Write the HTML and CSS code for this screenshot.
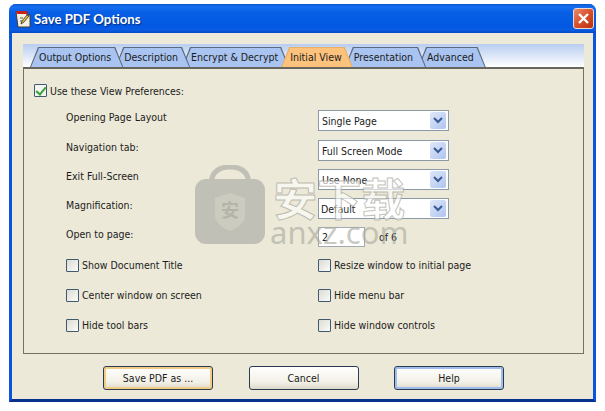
FILE: index.html
```html
<!DOCTYPE html>
<html>
  <head>
    <title>Save PDF Options</title>
    <link rel="stylesheet" href="styles.css">
  </head>
  <body class="body">
    <div class="window">
      <div class="titlebar">
        <svg class="app-icon" width="17" height="18" viewBox="0 0 17 18">
          <path d="M1 2h11v3h3v12H3z" fill="#f4f1e4" stroke="#4a3a30"/>
          <path d="M1 1h11l1 3H2z" fill="#c8201c"/>
          <path d="M6 14l1-3 5-6 2 1-5 6z" fill="#e8c040" stroke="#3a2a20" stroke-width=".8"/>
          <path d="M5 8h3M5 11h2" stroke="#555"/>
        </svg>
        <span class="title">Save PDF Options</span>
        <div class="close">
          <svg width="13" height="13" viewBox="0 0 13 13"><path d="M2 2l9 9M11 2l-9 9" stroke="#fff" stroke-width="2.4"/></svg>
        </div>
      </div>
      <div class="content">
        <div class="tabstrip">
          <div class="tab t1"><span>Output Options</span></div>
          <div class="tab t2"><span>Description</span></div>
          <div class="tab t3"><span>Encrypt &amp; Decrypt</span></div>
          <div class="tab active"><span>Initial View</span></div>
          <div class="tab t5"><span>Presentation</span></div>
          <div class="tab t6"><span>Advanced</span></div>
        </div>
        <div class="panel">
          <label class="check top-check"><input type="checkbox" checked><span>Use these View Preferences:</span></label>
          <div class="prefs">
            <div class="label">Opening Page Layout</div>
            <div class="combo"><span>Single Page</span><i class="arrow"><svg width="10" height="7" viewBox="0 0 10 7"><path d="M1 1l4 4 4-4" fill="none" stroke="#3a5a96" stroke-width="2"/></svg></i></div>
            <div class="label">Navigation tab:</div>
            <div class="combo"><span>Full Screen Mode</span><i class="arrow"><svg width="10" height="7" viewBox="0 0 10 7"><path d="M1 1l4 4 4-4" fill="none" stroke="#3a5a96" stroke-width="2"/></svg></i></div>
            <div class="label">Exit Full-Screen</div>
            <div class="combo"><span>Use None</span><i class="arrow"><svg width="10" height="7" viewBox="0 0 10 7"><path d="M1 1l4 4 4-4" fill="none" stroke="#3a5a96" stroke-width="2"/></svg></i></div>
            <div class="label">Magnification:</div>
            <div class="combo tight"><span>Default</span><i class="arrow"><svg width="10" height="7" viewBox="0 0 10 7"><path d="M1 1l4 4 4-4" fill="none" stroke="#3a5a96" stroke-width="2"/></svg></i></div>
            <div class="label">Open to page:</div>
            <div class="page-row"><div class="page-input">2</div><span>of 6</span></div>
          </div>
          <div class="checks">
            <label class="check"><input type="checkbox"><span>Show Document Title</span></label>
            <label class="check"><input type="checkbox"><span>Resize window to initial page</span></label>
            <label class="check"><input type="checkbox"><span>Center window on screen</span></label>
            <label class="check"><input type="checkbox"><span>Hide menu bar</span></label>
            <label class="check"><input type="checkbox"><span>Hide tool bars</span></label>
            <label class="check"><input type="checkbox"><span>Hide window controls</span></label>
          </div>
        </div>
        <div class="buttons">
          <div class="button default">Save PDF as ...</div>
          <div class="button">Cancel</div>
          <div class="button focus">Help</div>
        </div>
      </div>
      <!-- watermark sits on top of the dialog -->
      <div class="watermark">
        <svg width="72" height="80" viewBox="0 0 72 80">
          <path d="M17 18C18 6 26 2 36 2s18 4 19 16" fill="none" stroke="#bdbcb3" stroke-width="5"/>
          <rect x="1" y="14" width="70" height="65" rx="11" fill="#bdbcb3"/>
          <path d="M21 33l15-5 15 5v18c0 7-8 12-15 15-7-3-15-8-15-15z" fill="#c9c8be"/>
          <text x="36" y="52" text-anchor="middle" class="wm-glyph">安</text>
        </svg>
        <div class="wm-text">
          <div class="wm-cn">安下载</div>
          <div class="wm-en">anxz.com</div>
        </div>
      </div>
    </div>
  </body>
</html>
```

FILE: styles.css
```css
* {
  box-sizing: border-box;
}
.body {
  margin: 0;
  padding: 4px 0 0 9px;
  background: #fff;
  font-family: "DejaVu Sans Condensed", "DejaVu Sans", sans-serif;
  font-stretch: condensed;
  font-size: 10.5px;
  color: #1c1c1c;
  overflow: hidden;
}
.window {
  position: relative;
  width: 587px;
  height: 398px;
  display: flex;
  flex-direction: column;
  border-radius: 7px 7px 0 0;
  background: #0a55dc;
  border: 3px solid #0a55dc;
  border-top: 0;
  border-bottom-color: #06328c;
}
.titlebar {
  height: 29px;
  margin: 0 -3px;
  padding: 0 2px 0 6px;
  display: flex;
  align-items: center;
  flex-shrink: 0;
  border-radius: 7px 7px 0 0;
  background: linear-gradient(#0a58d4 0, #1670f0 3px, #0860e6 8px, #0258e2 22px, #0a5ce4 26px, #0648c4 29px);
}
.app-icon {
  margin-right: 2px;
}
.title {
  flex: 1;
  color: #fff;
  font-family: Lato, sans-serif;
  font-stretch: normal;
  font-size: 13.2px;
  font-weight: 700;
  text-shadow: 1px 1px 1px #0a2f80;
}
.close {
  width: 21px;
  height: 21px;
  display: flex;
  align-items: center;
  justify-content: center;
  border: 1px solid #f0d8d0;
  border-radius: 3px;
  background: linear-gradient(135deg, #e88c70, #d8502c 50%, #b8300c);
}
.content {
  flex: 1;
  display: flex;
  flex-direction: column;
  padding: 11px 9px 0 11px;
  background: #ece9d8;
}
.tabstrip {
  height: 23px;
  padding: 3px 0 0 7px;
  display: flex;
  flex-shrink: 0;
  background: linear-gradient(#b8cdf0, #fff);
}
.tab {
  position: relative;
  height: 20px;
  margin-right: -8px;
  padding: 0 12px 0 9px;
  line-height: 20px;
  white-space: nowrap;
  background: #5a6a80;
  clip-path: polygon(0 100%, 8px 0, calc(100% - 8px) 0, 100% 100%);
}
.tab::before {
  content: "";
  position: absolute;
  inset: 1px 1px 0 1px;
  background: #a9c4f0;
  clip-path: polygon(0 100%, 8px 0, calc(100% - 8px) 0, 100% 100%);
}
.tab span {
  position: relative;
}
.t1 { z-index: 6; }
.t2 { z-index: 5; }
.t3 { z-index: 4; padding-right: 11px; }
.t5 { z-index: 3; padding-right: 13px; }
.t6 { z-index: 2; }
.tab.active {
  z-index: 7;
  padding-right: 11px;
  background: #e8b060;
}
.tab.active::before {
  background: #fdc27c;
}
.panel {
  height: 287px;
  padding: 15px 0 0 10px;
  flex-shrink: 0;
  border: 1px solid #75715f;
  border-width: 2px 1px 1px 1px;
  border-top-color: #66665e;
}
.check {
  display: flex;
  align-items: center;
  gap: 3px;
}
.check input {
  appearance: none;
  width: 13px;
  height: 13px;
  margin: 0;
  border: 1px solid #3f5a70;
  border-radius: 1px;
  background: linear-gradient(135deg, #dcdcd4, #fbfbf8);
}
.check input:checked {
  background: #f5f5ef;
  position: relative;
}
.check input:checked::after {
  content: "";
  position: absolute;
  left: 3px;
  top: 0;
  width: 4px;
  height: 8px;
  border: solid #3aa23a;
  border-width: 0 2px 2px 0;
  transform: rotate(40deg);
}
.prefs {
  margin: 12px 0 0 32px;
  display: grid;
  grid-template-columns: 252px 131px;
  grid-template-rows: 30px 29px 29px 29px 29px;
  align-items: start;
}
.label {
  line-height: 14px;
  height: 14px;
  margin-top: 1px;
}
.combo {
  height: 21px;
  margin-top: 1px;
  display: flex;
  align-items: center;
  justify-content: space-between;
  padding: 0 2px 0 3px;
  background: #fff;
  border: 1px solid #8a9aa8;
}
.combo.tight {
  padding-left: 2px;
}
.arrow {
  width: 16px;
  height: 17px;
  display: flex;
  align-items: center;
  justify-content: center;
  border-radius: 2px;
  background: linear-gradient(135deg, #dfe8fa, #aec4ee);
}
.page-row {
  display: flex;
  align-items: center;
  gap: 14px;
  margin-top: 1px;
}
.page-input {
  width: 47px;
  height: 20px;
  padding-left: 3px;
  line-height: 19px;
  background: #fff;
  border: 1px solid #a0aab0;
}
.checks {
  margin: -5px 0 0 32px;
  display: grid;
  grid-template-columns: 252px 1fr;
  grid-auto-rows: 30px;
  align-items: center;
}
.buttons {
  display: flex;
  gap: 35.5px;
  padding: 12px 0 0 80px;
}
.button {
  width: 110px;
  height: 24px;
  line-height: 22px;
  text-align: center;
  border: 1px solid #2a3a50;
  border-radius: 3px;
  background: linear-gradient(#fff, #f2f0e6 70%, #dcd8c8);
}
.button.default {
  box-shadow: inset 0 0 0 2px #f0cc84;
}
.button.focus {
  box-shadow: inset 0 0 0 2px #9fbcea;
}
.watermark {
  position: absolute;
  left: 182px;
  top: 161px;
  display: flex;
  gap: 4px;
  opacity: 0.9;
  pointer-events: none;
}
.wm-glyph {
  font-family: "Noto Sans CJK SC", sans-serif;
  font-size: 18px;
  font-weight: 700;
  fill: #b0afa5;
}
.wm-text {
  padding-top: 8px;
  text-align: center;
}
.wm-cn {
  font-family: "Noto Sans CJK SC", sans-serif;
  font-stretch: normal;
  font-size: 44px;
  font-weight: 700;
  line-height: 48px;
  color: rgba(255, 255, 255, 0.7);
  -webkit-text-stroke: 1px rgba(170, 170, 160, 0.8);
}
.wm-en {
  font-family: "Noto Sans", sans-serif;
  font-stretch: normal;
  font-size: 31px;
  line-height: 22px;
  color: rgba(170, 170, 160, 0.7);
}
```
